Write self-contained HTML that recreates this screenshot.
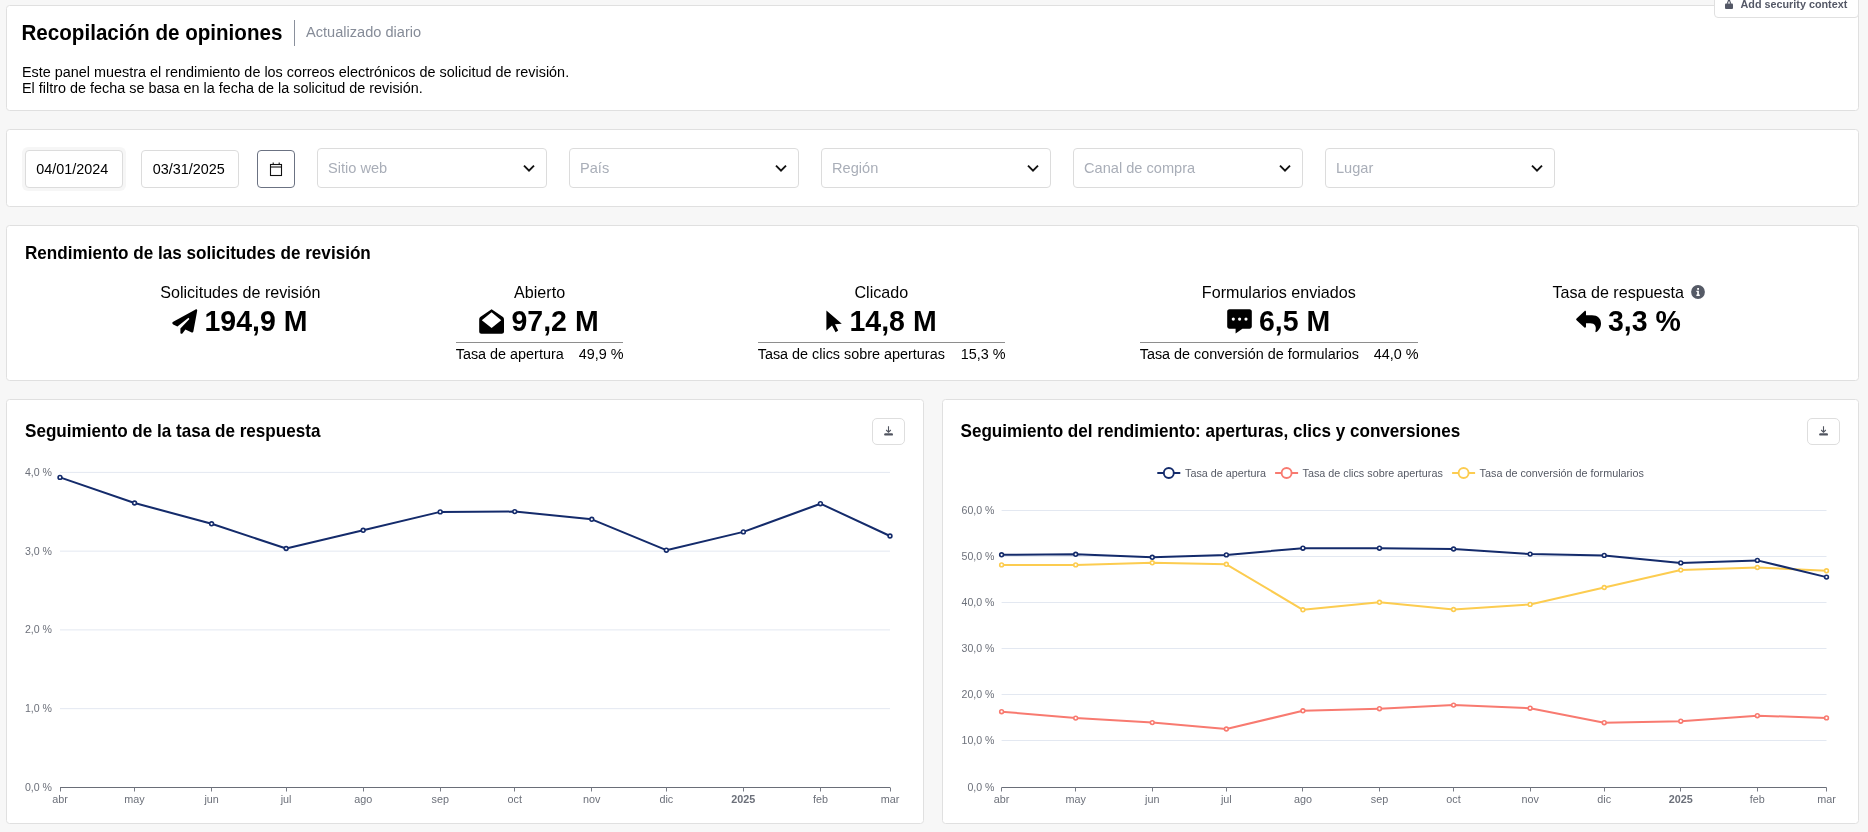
<!DOCTYPE html>
<html><head><meta charset="utf-8"><style>*{box-sizing:border-box;margin:0;padding:0}
html,body{width:1868px;height:832px;overflow:hidden;background:#f7f7f7;font-family:"Liberation Sans",sans-serif;color:#000}
.p{position:absolute;background:#fff;border:1px solid #e0e0e0;border-radius:3.5px}
.a{position:absolute;white-space:nowrap}
.inp{position:absolute;background:#fff;border:1px solid #dcdcdc;border-radius:4px}
.sel{position:absolute;background:#fff;border:1px solid #dcdcdc;border-radius:4px;width:230px;height:40px;top:148px}
.dl{position:absolute;width:33px;height:27px;border:1px solid #dedede;border-radius:5px;background:#fff}
.dl svg{position:absolute;left:10px;top:7.3px}
</style></head><body>
<div id="w" style="position:absolute;left:0;top:0;width:1868px;height:832px;will-change:transform">
<div class="p" style="left:6px;top:5px;width:1853px;height:106px"></div>
<div class="a" style="left:21.5px;top:21px;font-size:20.6px;line-height:23px;font-weight:bold;transform:scaleY(1.06);transform-origin:0 19px;">Recopilación de opiniones</div>
<div class="a" style="left:294px;top:20px;width:1px;height:26px;background:#8a909c"></div>
<div class="a" style="left:306px;top:24px;font-size:14.6px;line-height:16px;color:#868c98;transform:scaleY(1.03);transform-origin:0 13px;">Actualizado diario</div>
<div class="a" style="left:22px;top:64px;font-size:14.4px;line-height:16px;transform:scaleY(1.03);transform-origin:0 13px;">Este panel muestra el rendimiento de los correos electrónicos de solicitud de revisión.</div>
<div class="a" style="left:22px;top:80px;font-size:14.4px;line-height:16px;transform:scaleY(1.03);transform-origin:0 13px;">El filtro de fecha se basa en la fecha de la solicitud de revisión.</div>
<div class="a" style="left:1714px;top:-20px;width:145px;height:38px;background:#fff;border:1px solid #e0e0e0;border-radius:4px"></div>
<svg class="a" style="left:1724px;top:0px" width="10" height="10" viewBox="0 0 10 10"><path d="M3.3 3.8 L4.4 0.6 H5.6 L6.7 3.8" fill="none" stroke="#545866" stroke-width="1.1"/><rect x="1" y="3.5" width="8" height="5.4" rx="1" fill="#545866"/></svg>
<div class="a" style="left:1740.5px;top:-2px;font-size:10.8px;line-height:12px;font-weight:bold;color:#545866;transform:scaleY(1.05);transform-origin:0 10px;">Add security context</div>
<div class="p" style="left:6px;top:129px;width:1853px;height:78px"></div>
<div class="a" style="left:22px;top:147px;width:104px;height:44px;border-radius:6px;background:#f6f6f6"></div>
<div class="inp" style="left:25px;top:150px;width:98px;height:38px"></div>
<div class="a" style="left:36.3px;top:161px;font-size:14.4px;line-height:16px;transform:scaleY(1.04);transform-origin:0 13px;">04/01/2024</div>
<div class="inp" style="left:141px;top:150px;width:98px;height:38px"></div>
<div class="a" style="left:152.8px;top:161px;font-size:14.4px;line-height:16px;transform:scaleY(1.04);transform-origin:0 13px;">03/31/2025</div>
<div class="inp" style="left:257px;top:150px;width:38px;height:38px;border-color:#6b7282"></div>
<svg class="a" style="left:269px;top:161px" width="14" height="16" viewBox="0 0 14 16"><rect x="1.5" y="3.5" width="11" height="11" fill="none" stroke="#111" stroke-width="1.1"/><line x1="1.5" y1="6" x2="12.5" y2="6" stroke="#111" stroke-width="1.1"/><line x1="4.2" y1="1.5" x2="4.2" y2="3.5" stroke="#111" stroke-width="1.1"/><line x1="10.2" y1="1.5" x2="10.2" y2="3.5" stroke="#111" stroke-width="1.1"/></svg>
<div class="sel" style="left:317px"></div>
<div class="a" style="left:328px;top:160px;font-size:14.6px;line-height:16px;color:#a9aeb8;transform:scaleY(1.04);transform-origin:0 13px;">Sitio web</div>
<svg class="a" style="left:523.3px;top:164px" width="12" height="9" viewBox="0 0 12 9"><path d="M1 1.6 L6 6.6 L11 1.6" fill="none" stroke="#111" stroke-width="1.9"/></svg>
<div class="sel" style="left:569px"></div>
<div class="a" style="left:580px;top:160px;font-size:14.6px;line-height:16px;color:#a9aeb8;transform:scaleY(1.04);transform-origin:0 13px;">País</div>
<svg class="a" style="left:775.3px;top:164px" width="12" height="9" viewBox="0 0 12 9"><path d="M1 1.6 L6 6.6 L11 1.6" fill="none" stroke="#111" stroke-width="1.9"/></svg>
<div class="sel" style="left:821px"></div>
<div class="a" style="left:832px;top:160px;font-size:14.6px;line-height:16px;color:#a9aeb8;transform:scaleY(1.04);transform-origin:0 13px;">Región</div>
<svg class="a" style="left:1027.3px;top:164px" width="12" height="9" viewBox="0 0 12 9"><path d="M1 1.6 L6 6.6 L11 1.6" fill="none" stroke="#111" stroke-width="1.9"/></svg>
<div class="sel" style="left:1073px"></div>
<div class="a" style="left:1084px;top:160px;font-size:14.6px;line-height:16px;color:#a9aeb8;transform:scaleY(1.04);transform-origin:0 13px;">Canal de compra</div>
<svg class="a" style="left:1279.3px;top:164px" width="12" height="9" viewBox="0 0 12 9"><path d="M1 1.6 L6 6.6 L11 1.6" fill="none" stroke="#111" stroke-width="1.9"/></svg>
<div class="sel" style="left:1325px"></div>
<div class="a" style="left:1336px;top:160px;font-size:14.6px;line-height:16px;color:#a9aeb8;transform:scaleY(1.04);transform-origin:0 13px;">Lugar</div>
<svg class="a" style="left:1531.3px;top:164px" width="12" height="9" viewBox="0 0 12 9"><path d="M1 1.6 L6 6.6 L11 1.6" fill="none" stroke="#111" stroke-width="1.9"/></svg>
<div class="p" style="left:6px;top:225px;width:1853px;height:156px"></div>
<div class="a" style="left:25px;top:244px;font-size:17.1px;line-height:19px;font-weight:bold;transform:scaleY(1.04);transform-origin:0 15px;">Rendimiento de las solicitudes de revisión</div>
<svg class="a" style="left:0;top:0" width="1868" height="400" viewBox="0 0 1868 400"><path d="M195.6 309.4 C196.6 309 197.4 309.8 197.2 310.8 L193.4 331.2 C193.2 332.4 192.2 332.8 191.2 332.3 L185.4 329.6 L182.4 333.4 C181.6 334.2 180.4 333.8 180.4 332.8 V328.6 L189.4 318.9 L188.5 317.8 L177.4 326.4 L173.2 324.4 C172 323.8 172 322.4 173.2 321.8 Z"/><path d="M491.6 309.2 L502.6 316.8 C503.6 317.6 504 318.4 504 319.4 V331.5 C504 332.8 503 333.8 501.8 333.8 H481.4 C480.2 333.8 479.2 332.8 479.2 331.5 V319.4 C479.2 318.4 479.6 317.6 480.6 316.8 Z M491.6 312.2 L481.8 320.2 L491.6 328 L501.2 320.2 Z" fill-rule="evenodd"/><path d="M826.4 310.6 L841.8 323.8 L835 324.2 L838.2 330.4 L835.6 332.2 L832 325.6 L826.4 330.4 Z"/><path d="M1229.4 309.2 H1249.6 C1250.8 309.2 1251.8 310.2 1251.8 311.4 V326.6 C1251.8 327.8 1250.8 328.8 1249.6 328.8 H1242.4 L1235.6 333.6 V328.8 H1229.4 C1228.2 328.8 1227.2 327.8 1227.2 326.6 V311.4 C1227.2 310.2 1228.2 309.2 1229.4 309.2 Z"/><circle cx="1233.3" cy="319.1" r="1.6" fill="#fff"/><circle cx="1239.6" cy="319.1" r="1.6" fill="#fff"/><circle cx="1246" cy="319.1" r="1.6" fill="#fff"/><path d="M1576.6 318.4 L1584.4 311.2 C1585.2 310.5 1586 310.9 1586 312 V315.2 H1592 C1597.6 315.2 1601 318.4 1601 323.4 C1601 327.6 1598.4 330.6 1596.4 332 C1595.8 332.4 1595.2 332 1595.4 331.3 C1596.8 326.6 1595 323.2 1590 323.2 H1586 V326.6 C1586 327.6 1585.2 328.1 1584.4 327.4 L1576.6 320.2 C1576 319.6 1576 319 1576.6 318.4 Z"/></svg>
<div class="a" style="left:-259.7px;top:283px;font-size:16.1px;line-height:18px;width:1000px;text-align:center;">Solicitudes de revisión</div>
<div class="a" style="left:204.5px;top:305px;font-size:28.5px;line-height:32px;font-weight:bold;transform:scaleY(1.05);transform-origin:0 26px;">194,9 M</div>
<div class="a" style="left:39.60000000000002px;top:283px;font-size:16.1px;line-height:18px;width:1000px;text-align:center;">Abierto</div>
<div class="a" style="left:511.5px;top:305px;font-size:28.5px;line-height:32px;font-weight:bold;transform:scaleY(1.05);transform-origin:0 26px;">97,2 M</div>
<div class="a" style="left:456px;top:342px;width:167px;height:1px;background:#8e8e8e"></div>
<div class="a" style="left:455.7px;top:346px;font-size:14.4px;line-height:16px;transform:scaleY(1.03);transform-origin:0 13px;">Tasa de apertura</div>
<div class="a" style="left:456px;top:346px;font-size:14.4px;line-height:16px;width:167.5px;text-align:right;transform:scaleY(1.03);transform-origin:0 13px;">49,9 %</div>
<div class="a" style="left:381.29999999999995px;top:283px;font-size:16.1px;line-height:18px;width:1000px;text-align:center;">Clicado</div>
<div class="a" style="left:849.5px;top:305px;font-size:28.5px;line-height:32px;font-weight:bold;transform:scaleY(1.05);transform-origin:0 26px;">14,8 M</div>
<div class="a" style="left:758px;top:342px;width:247px;height:1px;background:#8e8e8e"></div>
<div class="a" style="left:757.7px;top:346px;font-size:14.4px;line-height:16px;transform:scaleY(1.03);transform-origin:0 13px;">Tasa de clics sobre aperturas</div>
<div class="a" style="left:758px;top:346px;font-size:14.4px;line-height:16px;width:247.5px;text-align:right;transform:scaleY(1.03);transform-origin:0 13px;">15,3 %</div>
<div class="a" style="left:778.8px;top:283px;font-size:16.1px;line-height:18px;width:1000px;text-align:center;">Formularios enviados</div>
<div class="a" style="left:1259px;top:305px;font-size:28.5px;line-height:32px;font-weight:bold;transform:scaleY(1.05);transform-origin:0 26px;">6,5 M</div>
<div class="a" style="left:1140px;top:342px;width:278px;height:1px;background:#8e8e8e"></div>
<div class="a" style="left:1139.7px;top:346px;font-size:14.4px;line-height:16px;transform:scaleY(1.03);transform-origin:0 13px;">Tasa de conversión de formularios</div>
<div class="a" style="left:1140px;top:346px;font-size:14.4px;line-height:16px;width:278.5px;text-align:right;transform:scaleY(1.03);transform-origin:0 13px;">44,0 %</div>
<div class="a" style="left:1552.5px;top:283px;font-size:16.1px;line-height:18px;">Tasa de respuesta</div>
<svg class="a" style="left:1691px;top:285px" width="14" height="14" viewBox="0 0 14 14"><circle cx="7" cy="7" r="6.9" fill="#555a66"/><rect x="6.2" y="3" width="1.8" height="1.8" fill="#fff"/><path d="M5.4 5.8 H7.9 V9.6 H8.8 V10.9 H5.4 V9.6 H6.2 V7 H5.4 Z" fill="#fff"/></svg>
<div class="a" style="left:1608px;top:305px;font-size:28.5px;line-height:32px;font-weight:bold;transform:scaleY(1.05);transform-origin:0 26px;">3,3 %</div>
<div class="p" style="left:6px;top:399px;width:918px;height:425px"></div>
<div class="a" style="left:25px;top:422px;font-size:17.1px;line-height:19px;font-weight:bold;transform:scaleY(1.04);transform-origin:0 15px;">Seguimiento de la tasa de respuesta</div>
<div class="dl" style="left:872px;top:418px"><svg width="11" height="10" viewBox="0 0 11 10"><path d="M5.5 0.3 V6.2 M3.2 4 L5.5 6.3 L7.8 4" fill="none" stroke="#50545f" stroke-width="1.1"/><rect x="1.2" y="7.2" width="8.8" height="2.4" rx="1.2" fill="#50545f"/></svg></div>
<div class="p" style="left:942px;top:399px;width:917px;height:425px"></div>
<div class="a" style="left:960.5px;top:422px;font-size:17.1px;line-height:19px;font-weight:bold;transform:scaleY(1.04);transform-origin:0 15px;">Seguimiento del rendimiento: aperturas, clics y conversiones</div>
<div class="dl" style="left:1807px;top:418px"><svg width="11" height="10" viewBox="0 0 11 10"><path d="M5.5 0.3 V6.2 M3.2 4 L5.5 6.3 L7.8 4" fill="none" stroke="#50545f" stroke-width="1.1"/><rect x="1.2" y="7.2" width="8.8" height="2.4" rx="1.2" fill="#50545f"/></svg></div>
<svg class="a" style="left:0;top:0" width="1868" height="832" viewBox="0 0 1868 832" font-family="Liberation Sans"><text x="52" y="791.0" text-anchor="end" font-size="10.6" fill="#6c707a" transform="translate(0 791.0) scale(1 1.08) translate(0 -791.0)">0,0 %</text><line x1="60" y1="708.65" x2="890" y2="708.65" stroke="#e3e8f1" stroke-width="1"/><text x="52" y="712.15" text-anchor="end" font-size="10.6" fill="#6c707a" transform="translate(0 712.15) scale(1 1.08) translate(0 -712.15)">1,0 %</text><line x1="60" y1="629.9" x2="890" y2="629.9" stroke="#e3e8f1" stroke-width="1"/><text x="52" y="633.4" text-anchor="end" font-size="10.6" fill="#6c707a" transform="translate(0 633.4) scale(1 1.08) translate(0 -633.4)">2,0 %</text><line x1="60" y1="551.15" x2="890" y2="551.15" stroke="#e3e8f1" stroke-width="1"/><text x="52" y="554.65" text-anchor="end" font-size="10.6" fill="#6c707a" transform="translate(0 554.65) scale(1 1.08) translate(0 -554.65)">3,0 %</text><line x1="60" y1="472.4" x2="890" y2="472.4" stroke="#e3e8f1" stroke-width="1"/><text x="52" y="475.9" text-anchor="end" font-size="10.6" fill="#6c707a" transform="translate(0 475.9) scale(1 1.08) translate(0 -475.9)">4,0 %</text><line x1="60" y1="787.5" x2="890" y2="787.5" stroke="#6a6e78" stroke-width="1"/><line x1="60.5" y1="787.5" x2="60.5" y2="791.5" stroke="#777b85" stroke-width="1"/><text x="60.00" y="803.0" text-anchor="middle" font-size="10.8" fill="#6c707a">abr</text><line x1="134.5" y1="787.5" x2="134.5" y2="791.5" stroke="#777b85" stroke-width="1"/><text x="134.55" y="803.0" text-anchor="middle" font-size="10.8" fill="#6c707a">may</text><line x1="211.5" y1="787.5" x2="211.5" y2="791.5" stroke="#777b85" stroke-width="1"/><text x="211.59" y="803.0" text-anchor="middle" font-size="10.8" fill="#6c707a">jun</text><line x1="286.5" y1="787.5" x2="286.5" y2="791.5" stroke="#777b85" stroke-width="1"/><text x="286.14" y="803.0" text-anchor="middle" font-size="10.8" fill="#6c707a">jul</text><line x1="363.5" y1="787.5" x2="363.5" y2="791.5" stroke="#777b85" stroke-width="1"/><text x="363.17" y="803.0" text-anchor="middle" font-size="10.8" fill="#6c707a">ago</text><line x1="440.5" y1="787.5" x2="440.5" y2="791.5" stroke="#777b85" stroke-width="1"/><text x="440.21" y="803.0" text-anchor="middle" font-size="10.8" fill="#6c707a">sep</text><line x1="514.5" y1="787.5" x2="514.5" y2="791.5" stroke="#777b85" stroke-width="1"/><text x="514.76" y="803.0" text-anchor="middle" font-size="10.8" fill="#6c707a">oct</text><line x1="591.5" y1="787.5" x2="591.5" y2="791.5" stroke="#777b85" stroke-width="1"/><text x="591.80" y="803.0" text-anchor="middle" font-size="10.8" fill="#6c707a">nov</text><line x1="666.5" y1="787.5" x2="666.5" y2="791.5" stroke="#777b85" stroke-width="1"/><text x="666.35" y="803.0" text-anchor="middle" font-size="10.8" fill="#6c707a">dic</text><line x1="743.5" y1="787.5" x2="743.5" y2="791.5" stroke="#777b85" stroke-width="1"/><text x="743.38" y="803.0" text-anchor="middle" font-size="10.8" fill="#6c707a" font-weight="bold">2025</text><line x1="820.5" y1="787.5" x2="820.5" y2="791.5" stroke="#777b85" stroke-width="1"/><text x="820.42" y="803.0" text-anchor="middle" font-size="10.8" fill="#6c707a">feb</text><line x1="890.5" y1="787.5" x2="890.5" y2="791.5" stroke="#777b85" stroke-width="1"/><text x="890.00" y="803.0" text-anchor="middle" font-size="10.8" fill="#6c707a">mar</text><polyline points="60.00,477.40 134.55,503.00 211.59,523.80 286.14,548.50 363.17,530.30 440.21,511.90 514.76,511.60 591.80,519.30 666.35,550.20 743.38,531.90 820.42,503.70 890.00,536.00" fill="none" stroke="#142b6b" stroke-width="2" stroke-linejoin="round"/><circle cx="60.00" cy="477.40" r="1.9" fill="#fff" stroke="#142b6b" stroke-width="1.6"/><circle cx="134.55" cy="503.00" r="1.9" fill="#fff" stroke="#142b6b" stroke-width="1.6"/><circle cx="211.59" cy="523.80" r="1.9" fill="#fff" stroke="#142b6b" stroke-width="1.6"/><circle cx="286.14" cy="548.50" r="1.9" fill="#fff" stroke="#142b6b" stroke-width="1.6"/><circle cx="363.17" cy="530.30" r="1.9" fill="#fff" stroke="#142b6b" stroke-width="1.6"/><circle cx="440.21" cy="511.90" r="1.9" fill="#fff" stroke="#142b6b" stroke-width="1.6"/><circle cx="514.76" cy="511.60" r="1.9" fill="#fff" stroke="#142b6b" stroke-width="1.6"/><circle cx="591.80" cy="519.30" r="1.9" fill="#fff" stroke="#142b6b" stroke-width="1.6"/><circle cx="666.35" cy="550.20" r="1.9" fill="#fff" stroke="#142b6b" stroke-width="1.6"/><circle cx="743.38" cy="531.90" r="1.9" fill="#fff" stroke="#142b6b" stroke-width="1.6"/><circle cx="820.42" cy="503.70" r="1.9" fill="#fff" stroke="#142b6b" stroke-width="1.6"/><circle cx="890.00" cy="536.00" r="1.9" fill="#fff" stroke="#142b6b" stroke-width="1.6"/><text x="994.5" y="791.0" text-anchor="end" font-size="10.6" fill="#6c707a" transform="translate(0 791.0) scale(1 1.08) translate(0 -791.0)">0,0 %</text><line x1="1001.6" y1="740.5" x2="1826.5" y2="740.5" stroke="#e3e8f1" stroke-width="1"/><text x="994.5" y="744.0" text-anchor="end" font-size="10.6" fill="#6c707a" transform="translate(0 744.0) scale(1 1.08) translate(0 -744.0)">10,0 %</text><line x1="1001.6" y1="694.5" x2="1826.5" y2="694.5" stroke="#e3e8f1" stroke-width="1"/><text x="994.5" y="698.0" text-anchor="end" font-size="10.6" fill="#6c707a" transform="translate(0 698.0) scale(1 1.08) translate(0 -698.0)">20,0 %</text><line x1="1001.6" y1="648.5" x2="1826.5" y2="648.5" stroke="#e3e8f1" stroke-width="1"/><text x="994.5" y="652.0" text-anchor="end" font-size="10.6" fill="#6c707a" transform="translate(0 652.0) scale(1 1.08) translate(0 -652.0)">30,0 %</text><line x1="1001.6" y1="602.5" x2="1826.5" y2="602.5" stroke="#e3e8f1" stroke-width="1"/><text x="994.5" y="606.0" text-anchor="end" font-size="10.6" fill="#6c707a" transform="translate(0 606.0) scale(1 1.08) translate(0 -606.0)">40,0 %</text><line x1="1001.6" y1="556.5" x2="1826.5" y2="556.5" stroke="#e3e8f1" stroke-width="1"/><text x="994.5" y="560.0" text-anchor="end" font-size="10.6" fill="#6c707a" transform="translate(0 560.0) scale(1 1.08) translate(0 -560.0)">50,0 %</text><line x1="1001.6" y1="510.5" x2="1826.5" y2="510.5" stroke="#e3e8f1" stroke-width="1"/><text x="994.5" y="514.0" text-anchor="end" font-size="10.6" fill="#6c707a" transform="translate(0 514.0) scale(1 1.08) translate(0 -514.0)">60,0 %</text><line x1="1001.6" y1="787.5" x2="1826.5" y2="787.5" stroke="#6a6e78" stroke-width="1"/><line x1="1001.5" y1="787.5" x2="1001.5" y2="791.5" stroke="#777b85" stroke-width="1"/><text x="1001.60" y="803.0" text-anchor="middle" font-size="10.8" fill="#6c707a">abr</text><line x1="1075.5" y1="787.5" x2="1075.5" y2="791.5" stroke="#777b85" stroke-width="1"/><text x="1075.69" y="803.0" text-anchor="middle" font-size="10.8" fill="#6c707a">may</text><line x1="1152.5" y1="787.5" x2="1152.5" y2="791.5" stroke="#777b85" stroke-width="1"/><text x="1152.26" y="803.0" text-anchor="middle" font-size="10.8" fill="#6c707a">jun</text><line x1="1226.5" y1="787.5" x2="1226.5" y2="791.5" stroke="#777b85" stroke-width="1"/><text x="1226.35" y="803.0" text-anchor="middle" font-size="10.8" fill="#6c707a">jul</text><line x1="1302.5" y1="787.5" x2="1302.5" y2="791.5" stroke="#777b85" stroke-width="1"/><text x="1302.91" y="803.0" text-anchor="middle" font-size="10.8" fill="#6c707a">ago</text><line x1="1379.5" y1="787.5" x2="1379.5" y2="791.5" stroke="#777b85" stroke-width="1"/><text x="1379.47" y="803.0" text-anchor="middle" font-size="10.8" fill="#6c707a">sep</text><line x1="1453.5" y1="787.5" x2="1453.5" y2="791.5" stroke="#777b85" stroke-width="1"/><text x="1453.57" y="803.0" text-anchor="middle" font-size="10.8" fill="#6c707a">oct</text><line x1="1530.5" y1="787.5" x2="1530.5" y2="791.5" stroke="#777b85" stroke-width="1"/><text x="1530.13" y="803.0" text-anchor="middle" font-size="10.8" fill="#6c707a">nov</text><line x1="1604.5" y1="787.5" x2="1604.5" y2="791.5" stroke="#777b85" stroke-width="1"/><text x="1604.22" y="803.0" text-anchor="middle" font-size="10.8" fill="#6c707a">dic</text><line x1="1680.5" y1="787.5" x2="1680.5" y2="791.5" stroke="#777b85" stroke-width="1"/><text x="1680.78" y="803.0" text-anchor="middle" font-size="10.8" fill="#6c707a" font-weight="bold">2025</text><line x1="1757.5" y1="787.5" x2="1757.5" y2="791.5" stroke="#777b85" stroke-width="1"/><text x="1757.35" y="803.0" text-anchor="middle" font-size="10.8" fill="#6c707a">feb</text><line x1="1826.5" y1="787.5" x2="1826.5" y2="791.5" stroke="#777b85" stroke-width="1"/><text x="1826.50" y="803.0" text-anchor="middle" font-size="10.8" fill="#6c707a">mar</text><polyline points="1001.60,711.70 1075.69,718.10 1152.26,722.60 1226.35,729.00 1302.91,710.80 1379.47,708.70 1453.57,705.10 1530.13,708.20 1604.22,722.70 1680.78,721.20 1757.35,715.70 1826.50,717.90" fill="none" stroke="#f87a70" stroke-width="2" stroke-linejoin="round"/><circle cx="1001.60" cy="711.70" r="1.9" fill="#fff" stroke="#f87a70" stroke-width="1.6"/><circle cx="1075.69" cy="718.10" r="1.9" fill="#fff" stroke="#f87a70" stroke-width="1.6"/><circle cx="1152.26" cy="722.60" r="1.9" fill="#fff" stroke="#f87a70" stroke-width="1.6"/><circle cx="1226.35" cy="729.00" r="1.9" fill="#fff" stroke="#f87a70" stroke-width="1.6"/><circle cx="1302.91" cy="710.80" r="1.9" fill="#fff" stroke="#f87a70" stroke-width="1.6"/><circle cx="1379.47" cy="708.70" r="1.9" fill="#fff" stroke="#f87a70" stroke-width="1.6"/><circle cx="1453.57" cy="705.10" r="1.9" fill="#fff" stroke="#f87a70" stroke-width="1.6"/><circle cx="1530.13" cy="708.20" r="1.9" fill="#fff" stroke="#f87a70" stroke-width="1.6"/><circle cx="1604.22" cy="722.70" r="1.9" fill="#fff" stroke="#f87a70" stroke-width="1.6"/><circle cx="1680.78" cy="721.20" r="1.9" fill="#fff" stroke="#f87a70" stroke-width="1.6"/><circle cx="1757.35" cy="715.70" r="1.9" fill="#fff" stroke="#f87a70" stroke-width="1.6"/><circle cx="1826.50" cy="717.90" r="1.9" fill="#fff" stroke="#f87a70" stroke-width="1.6"/><polyline points="1001.60,564.90 1075.69,564.90 1152.26,562.80 1226.35,564.30 1302.91,609.80 1379.47,602.30 1453.57,609.50 1530.13,604.40 1604.22,587.50 1680.78,570.10 1757.35,567.50 1826.50,570.80" fill="none" stroke="#fccc50" stroke-width="2" stroke-linejoin="round"/><circle cx="1001.60" cy="564.90" r="1.9" fill="#fff" stroke="#fccc50" stroke-width="1.6"/><circle cx="1075.69" cy="564.90" r="1.9" fill="#fff" stroke="#fccc50" stroke-width="1.6"/><circle cx="1152.26" cy="562.80" r="1.9" fill="#fff" stroke="#fccc50" stroke-width="1.6"/><circle cx="1226.35" cy="564.30" r="1.9" fill="#fff" stroke="#fccc50" stroke-width="1.6"/><circle cx="1302.91" cy="609.80" r="1.9" fill="#fff" stroke="#fccc50" stroke-width="1.6"/><circle cx="1379.47" cy="602.30" r="1.9" fill="#fff" stroke="#fccc50" stroke-width="1.6"/><circle cx="1453.57" cy="609.50" r="1.9" fill="#fff" stroke="#fccc50" stroke-width="1.6"/><circle cx="1530.13" cy="604.40" r="1.9" fill="#fff" stroke="#fccc50" stroke-width="1.6"/><circle cx="1604.22" cy="587.50" r="1.9" fill="#fff" stroke="#fccc50" stroke-width="1.6"/><circle cx="1680.78" cy="570.10" r="1.9" fill="#fff" stroke="#fccc50" stroke-width="1.6"/><circle cx="1757.35" cy="567.50" r="1.9" fill="#fff" stroke="#fccc50" stroke-width="1.6"/><circle cx="1826.50" cy="570.80" r="1.9" fill="#fff" stroke="#fccc50" stroke-width="1.6"/><polyline points="1001.60,554.80 1075.69,554.30 1152.26,557.30 1226.35,554.90 1302.91,548.20 1379.47,548.20 1453.57,549.00 1530.13,554.10 1604.22,555.40 1680.78,562.90 1757.35,560.40 1826.50,577.10" fill="none" stroke="#142b6b" stroke-width="2" stroke-linejoin="round"/><circle cx="1001.60" cy="554.80" r="1.9" fill="#fff" stroke="#142b6b" stroke-width="1.6"/><circle cx="1075.69" cy="554.30" r="1.9" fill="#fff" stroke="#142b6b" stroke-width="1.6"/><circle cx="1152.26" cy="557.30" r="1.9" fill="#fff" stroke="#142b6b" stroke-width="1.6"/><circle cx="1226.35" cy="554.90" r="1.9" fill="#fff" stroke="#142b6b" stroke-width="1.6"/><circle cx="1302.91" cy="548.20" r="1.9" fill="#fff" stroke="#142b6b" stroke-width="1.6"/><circle cx="1379.47" cy="548.20" r="1.9" fill="#fff" stroke="#142b6b" stroke-width="1.6"/><circle cx="1453.57" cy="549.00" r="1.9" fill="#fff" stroke="#142b6b" stroke-width="1.6"/><circle cx="1530.13" cy="554.10" r="1.9" fill="#fff" stroke="#142b6b" stroke-width="1.6"/><circle cx="1604.22" cy="555.40" r="1.9" fill="#fff" stroke="#142b6b" stroke-width="1.6"/><circle cx="1680.78" cy="562.90" r="1.9" fill="#fff" stroke="#142b6b" stroke-width="1.6"/><circle cx="1757.35" cy="560.40" r="1.9" fill="#fff" stroke="#142b6b" stroke-width="1.6"/><circle cx="1826.50" cy="577.10" r="1.9" fill="#fff" stroke="#142b6b" stroke-width="1.6"/><line x1="1157.3" y1="473" x2="1180.3" y2="473" stroke="#142b6b" stroke-width="2"/><circle cx="1168.8" cy="473" r="5" fill="#fff" stroke="#142b6b" stroke-width="1.9"/><text x="1185" y="476.6" font-size="10.8" fill="#555964" transform="translate(0 476.6) scale(1 1.05) translate(0 -476.6)">Tasa de apertura</text><line x1="1275.1" y1="473" x2="1298.1" y2="473" stroke="#f87a70" stroke-width="2"/><circle cx="1286.6" cy="473" r="5" fill="#fff" stroke="#f87a70" stroke-width="1.9"/><text x="1302.5" y="476.6" font-size="10.8" fill="#555964" transform="translate(0 476.6) scale(1 1.05) translate(0 -476.6)">Tasa de clics sobre aperturas</text><line x1="1452.1" y1="473" x2="1475.1" y2="473" stroke="#fccc50" stroke-width="2"/><circle cx="1463.6" cy="473" r="5" fill="#fff" stroke="#fccc50" stroke-width="1.9"/><text x="1479.6" y="476.6" font-size="10.8" fill="#555964" transform="translate(0 476.6) scale(1 1.05) translate(0 -476.6)">Tasa de conversión de formularios</text></svg>
</div>
</body></html>
